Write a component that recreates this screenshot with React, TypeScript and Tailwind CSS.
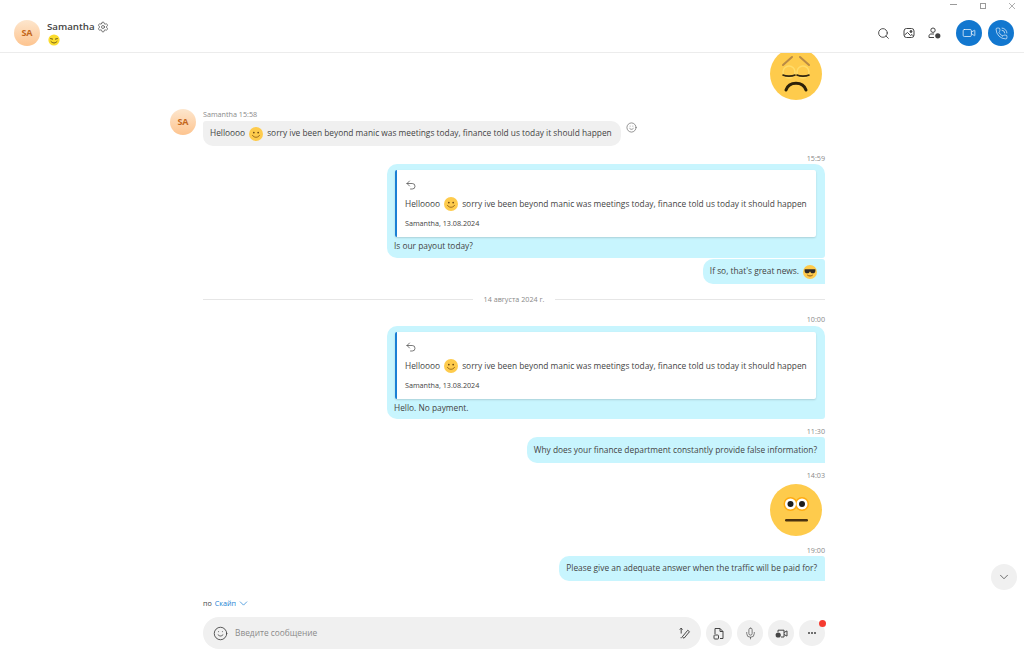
import { ReactNode } from 'react';
import { Search, Video, PhoneCall, ChevronDown, Smile, Mic, Undo2, Settings } from 'lucide-react';

const Face = ({ size = 14, children }: { size?: number; children: ReactNode }) => (
  <svg width={size} height={size} viewBox="0 0 52 52" className="inline-block shrink-0">
    <circle cx="26" cy="26" r="26" fill="#fecb4c" />
    {children}
  </svg>
);

const SmileFace = () => (
  <Face>
    <circle cx="18" cy="21" r="3" fill="#5b3a10" />
    <circle cx="34" cy="21" r="3" fill="#5b3a10" />
    <path d="M13 31c4 10 22 10 26 0" fill="none" stroke="#8a5a14" strokeWidth="3" strokeLinecap="round" />
  </Face>
);

const CoolFace = () => (
  <Face>
    <path d="M6 16h40v5c0 7-4 10-10 10s-8-4-10-8c-2 4-4 8-10 8S6 28 6 21z" fill="#2e2a26" />
    <path d="M17 38c5 4 13 4 18 0" fill="none" stroke="#7b4e12" strokeWidth="3.5" strokeLinecap="round" />
  </Face>
);

const SadSticker = () => (
  <Face size={52}>
    <path d="M13 17l9-8M39 17l-9-8" stroke="#b98a45" strokeWidth="2" strokeLinecap="round" />
    <circle cx="19" cy="24" r="6" fill="none" stroke="#ffdc6a" strokeWidth="1.5" />
    <circle cx="33" cy="24" r="6" fill="none" stroke="#ffdc6a" strokeWidth="1.5" />
    <path d="M13 27c3 1.5 9 1.5 12 0M27 27c3 1.5 9 1.5 12 0" fill="none" stroke="#33260f" strokeWidth="1.6" strokeLinecap="round" />
    <path d="M16 42c3-9 17-9 20 0" fill="none" stroke="#2d2109" strokeWidth="3" strokeLinecap="round" />
  </Face>
);

const FlatSticker = () => (
  <Face size={52}>
    <circle cx="20.5" cy="20" r="7" fill="#ffab10" />
    <circle cx="32" cy="20" r="7" fill="#ffab10" />
    <circle cx="20.5" cy="20" r="5.5" fill="#fff" />
    <circle cx="32" cy="20" r="5.5" fill="#fff" />
    <circle cx="20.5" cy="20" r="3" fill="#1c1c1c" />
    <circle cx="32" cy="20" r="3" fill="#1c1c1c" />
    <rect x="15" y="35" width="23" height="2.5" rx="1.2" fill="#4a3210" />
  </Face>
);

const Avatar = () => (
  <div className="flex h-[26px] w-[26px] shrink-0 items-center justify-center rounded-full bg-gradient-to-b from-[#fde6cd] to-[#fdc48f] text-[9px] font-bold text-[#c4661a]">
    SA
  </div>
);

const Time = ({ children, className }: { children: ReactNode; className: string }) => (
  <div className={`flex h-3 items-center justify-end text-[7.2px] text-[#8a8a8a] ${className}`}>{children}</div>
);

const QuotedBubble = ({ children, className }: { children: ReactNode; className: string }) => (
  <div className={`ml-auto flex w-[438px] flex-col rounded-t-[10px] rounded-bl-[10px] rounded-br-[3px] bg-[#c8f5fe] pl-[7px] pr-[9px] pt-1.5 ${className}`}>
    <div className="ml-px flex h-[67px] flex-col rounded-[2px] border-l-2 border-[#1a7fd4] bg-white pl-2 shadow-[0_1px_2px_rgba(0,0,0,0.15)]">
      <Undo2 size={12} strokeWidth={1.3} className="mt-[9px] text-[#333]" />
      <div className="mt-[5px] flex h-[16px] items-center gap-1 whitespace-nowrap">
        Helloooo <SmileFace /> sorry ive been beyond manic was meetings today, finance told us today it should happen
      </div>
      <div className="mt-[5px] text-[7.2px] leading-[12px] text-[#444]">Samantha, 13.08.2024</div>
    </div>
    <div className="flex flex-1 items-center pb-0.5">{children}</div>
  </div>
);

const Bubble = ({ children, className }: { children: ReactNode; className: string }) => (
  <div className={`ml-auto flex w-fit items-center gap-1 rounded-l-[10px] rounded-tr-[3px] bg-[#c8f5fe] pl-[7px] pr-2 ${className}`}>
    {children}
  </div>
);

const RoundButton = ({ children, className = '' }: { children: ReactNode; className?: string }) => (
  <button className={`relative flex h-[26px] w-[26px] shrink-0 items-center justify-center rounded-full bg-[#f0f0f0] text-[#4a4a4a] ${className}`}>
    {children}
  </button>
);

export default function App() {
  return (
    <div className="relative flex h-[661px] w-[1024px] flex-col overflow-hidden bg-white text-[8.35px] text-[#444] [font-family:'Open_Sans',sans-serif]">
      {/* window controls */}
      <div className="absolute right-[9px] top-0 z-10 flex items-center gap-[23px] text-[#9a9a9a]">
        <div className="h-px w-[7px] bg-[#9a9a9a]" />
        <div className="mt-[3px] h-[6px] w-[6px] border border-[#9a9a9a]" />
        <svg width="6" height="6" viewBox="0 0 6 6" className="mt-[3px]"><path d="M0 0l6 6M6 0L0 6" stroke="#9a9a9a" strokeWidth="0.8" /></svg>
      </div>

      <header className="z-10 flex h-[53px] shrink-0 items-center border-b border-[#ececec] bg-transparent pl-3.5 pr-2.5 pt-3.5">
        <Avatar />
        <div className="ml-[7px] flex flex-col">
          <div className="flex items-center gap-[2px] text-[9.7px] font-semibold leading-[14px] text-[#444]">
            Samantha <Settings size={12} strokeWidth={1.4} />
          </div>
          <div className="ml-px flex h-3 items-center">
            <svg width="12" height="12" viewBox="0 0 12 12">
              <circle cx="6" cy="6" r="5.6" fill="#fbdc2e" />
              <path d="M2.6 4.6l2 .5M7.4 5.1l2-.5M3 7.5c2 2 4 2 6 0" fill="none" stroke="#5a4a10" strokeWidth="0.9" strokeLinecap="round" />
            </svg>
          </div>
        </div>
        <div className="ml-auto flex items-center">
          <Search size={13} strokeWidth={1.7} className="text-[#444]" />
          <svg width="12" height="12" viewBox="0 0 12 12" className="ml-[13px]" fill="none" stroke="#444">
            <rect x="1" y="1.5" width="10" height="9" rx="2.5" />
            <path d="M1.5 8l3-2.5 3 3 1.5-1 1.5 1.5" />
            <circle cx="8" cy="4.5" r="1" fill="#444" />
          </svg>
          <svg width="13" height="12" viewBox="0 0 13 12" className="ml-[13px]" fill="none" stroke="#444">
            <circle cx="5" cy="3.2" r="2.2" />
            <path d="M1 10.5V9c0-1.3 1-2 2-2h3" />
            <path d="M1 10.5h5" />
            <circle cx="9.8" cy="8.8" r="2.6" fill="#444" stroke="none" />
          </svg>
          <button className="ml-[15px] flex h-[26px] w-[26px] items-center justify-center rounded-full bg-[#1277cf] text-white">
            <Video size={14} strokeWidth={1.2} />
          </button>
          <button className="ml-1.5 flex h-[26px] w-[26px] items-center justify-center rounded-full bg-[#1277cf] text-white">
            <PhoneCall size={13} strokeWidth={1.2} />
          </button>
        </div>
      </header>

      <main className="min-h-0 flex-1 overflow-hidden pl-[170px] pr-[199px]">
        <div className="-mt-[5px] flex justify-end pr-[3px]">
          <SadSticker />
        </div>

        <div className="mt-[9px] flex">
          <Avatar />
          <div className="ml-[7px] flex flex-col">
            <div className="h-3 text-[7.2px] leading-[10px] text-[#8a8a8a]">Samantha 15:58</div>
            <div className="flex items-center">
              <div className="flex h-[25px] w-[418px] items-center gap-1 whitespace-nowrap rounded-[10px] rounded-tl-[3px] bg-[#f0f0f0] px-[7px]">
                Helloooo <SmileFace /> sorry ive been beyond manic was meetings today, finance told us today it should happen
              </div>
              <Smile size={11} strokeWidth={1.5} className="-mt-[12px] ml-[5px] text-[#666]" />
            </div>
          </div>
        </div>

        <Time className="mt-1.5">15:59</Time>
        <QuotedBubble className="h-[94px]">Is our payout today?</QuotedBubble>
        <Bubble className="mt-px h-[25px]">If so, that's great news. <CoolFace /></Bubble>

        <div className="ml-[33px] mt-[9px] flex h-3 items-center gap-[11px] text-[7.2px] text-[#8a8a8a]">
          <div className="h-px flex-1 bg-[#e6e6e6]" />
          <span>14 августа 2024 г.</span>
          <div className="h-px flex-1 bg-[#e6e6e6]" />
        </div>

        <Time className="mt-2 mb-px">10:00</Time>
        <QuotedBubble className="h-[93px]">Hello. No payment.</QuotedBubble>

        <Time className="mt-1.5">11:30</Time>
        <Bubble className="h-[26px]">Why does your finance department constantly provide false information?</Bubble>

        <Time className="mt-1.5">14:03</Time>
        <div className="mt-[3px] flex justify-end pr-[3px]">
          <FlatSticker />
        </div>

        <Time className="mt-2">19:00</Time>
        <Bubble className="h-[25px]">Please give an adequate answer when the traffic will be paid for?</Bubble>
      </main>

      <button className="absolute right-[7px] top-[564px] flex h-[26px] w-[26px] items-center justify-center rounded-full bg-[#f0f0f0] text-[#444]">
        <ChevronDown size={14} strokeWidth={1.3} />
      </button>

      <footer className="h-[71px] shrink-0 pl-[203px] pr-[199px] pt-[7px]">
        <div className="flex h-3 items-center gap-[3px] text-[7.2px] text-[#444]">
          по <span className="text-[#1a7fd4]">Скайп</span>
          <ChevronDown size={13} strokeWidth={1.3} className="-ml-[2px] text-[#1a7fd4]" />
        </div>
        <div className="mt-2 flex items-center gap-[5px]">
          <div className="flex h-8 flex-1 items-center rounded-2xl bg-[#f0f0f0] pl-[10px] pr-[10px]">
            <Smile size={15} strokeWidth={1.4} className="text-[#444]" />
            <span className="ml-[7px] text-[#8a8a8a]">Введите сообщение</span>
            <svg width="12" height="12" viewBox="0 0 11 11" className="ml-auto" fill="none" stroke="#444">
              <path d="M2 1v5M.7 2.4L2 1l1.3 1.4M3 9l5-6 1.6 1.3-5 6zM1.5 9.8h1" strokeWidth="0.9" />
            </svg>
          </div>
          <RoundButton>
            <svg width="12" height="13" viewBox="0 0 12 13" fill="none" stroke="#444">
              <path d="M2 7V1.5h5L10 4.5V11.5H7M7 1.5v3h3" />
              <rect x="1" y="8" width="4.5" height="4" rx="0.8" />
            </svg>
          </RoundButton>
          <RoundButton>
            <Mic size={13} strokeWidth={1.3} />
          </RoundButton>
          <RoundButton>
            <svg width="13" height="12" viewBox="0 0 13 12" fill="none" stroke="#444">
              <path d="M3 5V3.2h6V10H6M9 5.5l3-1.6v5.2L9 7.5" />
              <circle cx="3.2" cy="8" r="2.6" fill="#444" stroke="none" />
            </svg>
          </RoundButton>
          <RoundButton>
            <span className="flex gap-[1.5px]">
              <i className="h-[1.5px] w-[1.5px] rounded-full bg-[#444]" />
              <i className="h-[1.5px] w-[1.5px] rounded-full bg-[#444]" />
              <i className="h-[1.5px] w-[1.5px] rounded-full bg-[#444]" />
            </span>
            <span className="absolute -right-px top-0 h-[7px] w-[7px] rounded-full bg-[#f53b30]" />
          </RoundButton>
        </div>
      </footer>
    </div>
  );
}
